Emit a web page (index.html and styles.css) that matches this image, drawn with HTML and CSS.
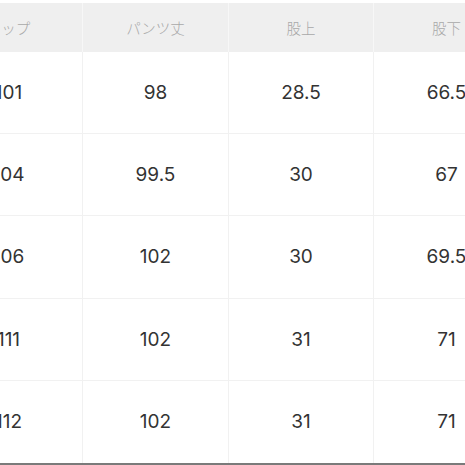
FILE: index.html
```html
<!DOCTYPE html>
<html lang="ja">
<head>
<meta charset="utf-8">
<link rel="stylesheet" href="styles.css">
</head>
<body>
<div class="frame">
  <div class="table">
    <div class="cell head">ヒップ</div>
    <div class="cell head">パンツ丈</div>
    <div class="cell head">股上</div>
    <div class="cell head">股下</div>

    <div class="cell">101</div>
    <div class="cell">98</div>
    <div class="cell">28.5</div>
    <div class="cell">66.5</div>

    <div class="cell">104</div>
    <div class="cell">99.5</div>
    <div class="cell">30</div>
    <div class="cell">67</div>

    <div class="cell">106</div>
    <div class="cell">102</div>
    <div class="cell">30</div>
    <div class="cell">69.5</div>

    <div class="cell">111</div>
    <div class="cell">102</div>
    <div class="cell">31</div>
    <div class="cell">71</div>

    <div class="cell last">112</div>
    <div class="cell last">102</div>
    <div class="cell last">31</div>
    <div class="cell last">71</div>
  </div>
</div>
</body>
</html>
```

FILE: styles.css
```css
html, body {
  margin: 0;
  padding: 0;
  background: #ffffff;
}

.frame {
  width: 465px;
  height: 465px;
  overflow: hidden;
  padding-top: 3px;
  box-sizing: border-box;
  border-bottom: 2px solid #7a7a7a;
  background: #ffffff;
}

.table {
  display: grid;
  grid-template-columns: 148px 146px 145px 146px;
  grid-template-rows: 49px repeat(5, 82.2px);
  margin-left: -65px;
  width: 585px;
  font-family: Inter, "Noto Sans CJK JP", sans-serif;
}

.cell {
  display: flex;
  align-items: center;
  justify-content: center;
  box-sizing: border-box;
  border-right: 1px solid #f1f1f1;
  border-bottom: 1px solid #f1f1f1;
  color: #333333;
  font-size: 19px;
  font-weight: 400;
}

.cell.head {
  background: #efefef;
  color: #a8a8a8;
  font-family: "Noto Sans CJK JP", sans-serif;
  font-size: 14.5px;
  font-weight: 300;
  border-right: 1px solid #f7f7f7;
  border-bottom: none;
}

.cell.last {
  border-bottom: none;
}
```
